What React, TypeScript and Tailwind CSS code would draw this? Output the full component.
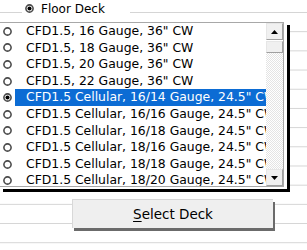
import React from "react";

const decks = [
  'CFD1.5, 16 Gauge, 36" CW',
  'CFD1.5, 18 Gauge, 36" CW',
  'CFD1.5, 20 Gauge, 36" CW',
  'CFD1.5, 22 Gauge, 36" CW',
  'CFD1.5 Cellular, 16/14 Gauge, 24.5" CW',
  'CFD1.5 Cellular, 16/16 Gauge, 24.5" CW',
  'CFD1.5 Cellular, 16/18 Gauge, 24.5" CW',
  'CFD1.5 Cellular, 18/16 Gauge, 24.5" CW',
  'CFD1.5 Cellular, 18/18 Gauge, 24.5" CW',
  'CFD1.5 Cellular, 18/20 Gauge, 24.5" CW',
  'CFD1.5 Cellular, 20/20 Gauge, 24.5" CW',
];

const Radio = ({ checked, size = 8 }: { checked: boolean; size?: number }) => (
  <svg width={size} height={size} viewBox="0 0 8 8" className="shrink-0">
    <circle cx="4" cy="4" r="3.2" fill="#fff" stroke="#4a4a4a" strokeWidth="1.4" />
    {checked && <circle cx="4" cy="4" r="1.8" fill="#000" />}
  </svg>
);

const ArrowButton = ({ up }: { up: boolean }) => (
  <div className="h-[17px] shrink-0 flex items-center justify-center bg-[#f0f0f0] border border-t-[#e6e6e6] border-l-[#e6e6e6] border-r-[#a0a0a0] border-b-[#a0a0a0]">
    <svg width="7" height="4" viewBox="0 0 7 4">
      <polygon points={up ? "3.5,0 7,4 0,4" : "0,0 7,0 3.5,4"} fill="#000" />
    </svg>
  </div>
);

export default function App() {
  const selected = 4;

  return (
    <div
      className="w-[307px] h-[250px] overflow-hidden bg-white bg-[linear-gradient(#d4d4d4_0_1px,transparent_1px)] bg-[length:100%_19.2px] bg-[position:0_12px] text-black"
      style={{ fontFamily: '"DejaVu Sans", Verdana, sans-serif' }}
    >
      {/* frame caption */}
      <div className="h-[16px] pl-[22px] flex">
        <div className="w-[108px] bg-white flex items-center gap-[7px] pl-[3px] text-[12px] leading-none">
          <Radio checked size={9} />
          <span className="pt-[1px]">Floor Deck</span>
        </div>
      </div>

      {/* list box with dark shadow */}
      <div className="mt-[6px] w-[287px] bg-white pr-[3px] pb-[2px] shadow-[3px_3px_0_0_#000]">
        <div className="h-[165px] flex border-t border-r border-b border-[#a8a8a8]">
          <div className="flex-1 min-w-0 overflow-hidden text-[12.4px] leading-none">
            {decks.map((d, i) => (
              <div key={i} className="h-[16.6px] flex items-center">
                <div className="w-[15px] shrink-0 pl-[3px] flex items-center">
                  <Radio checked={i === selected} size={9} />
                </div>
                <div
                  className={
                    i === selected
                      ? "flex-1 min-w-0 overflow-hidden h-full flex items-center pl-[11px] whitespace-nowrap bg-[#0c6cd4] text-white"
                      : "flex-1 min-w-0 overflow-hidden h-full flex items-center pl-[11px] whitespace-nowrap"
                  }
                >
                  {d}
                </div>
              </div>
            ))}
          </div>
          <div className="w-[17px] shrink-0 flex flex-col">
            <ArrowButton up />
            <div className="h-[12px] shrink-0 mt-[1px] bg-[#f0f0f0] border border-t-[#e6e6e6] border-l-[#e6e6e6] border-r-[#a0a0a0] border-b-[#a0a0a0]" />
            <div className="flex-1 bg-[repeating-conic-gradient(#e4e4e4_0_25%,#ffffff_0_50%)] bg-[length:2px_2px]" />
            <ArrowButton up={false} />
          </div>
        </div>
      </div>

      {/* command button */}
      <div className="mt-[10px] ml-[72px] w-[201px] h-[29px] flex items-center justify-center bg-[#efefef] border-t border-l border-[#d8d8d8] shadow-[2px_3px_0_0_#6b6b6b] text-[13.5px]">
        <span>
          <span className="underline underline-offset-2">S</span>elect Deck
        </span>
      </div>
    </div>
  );
}
